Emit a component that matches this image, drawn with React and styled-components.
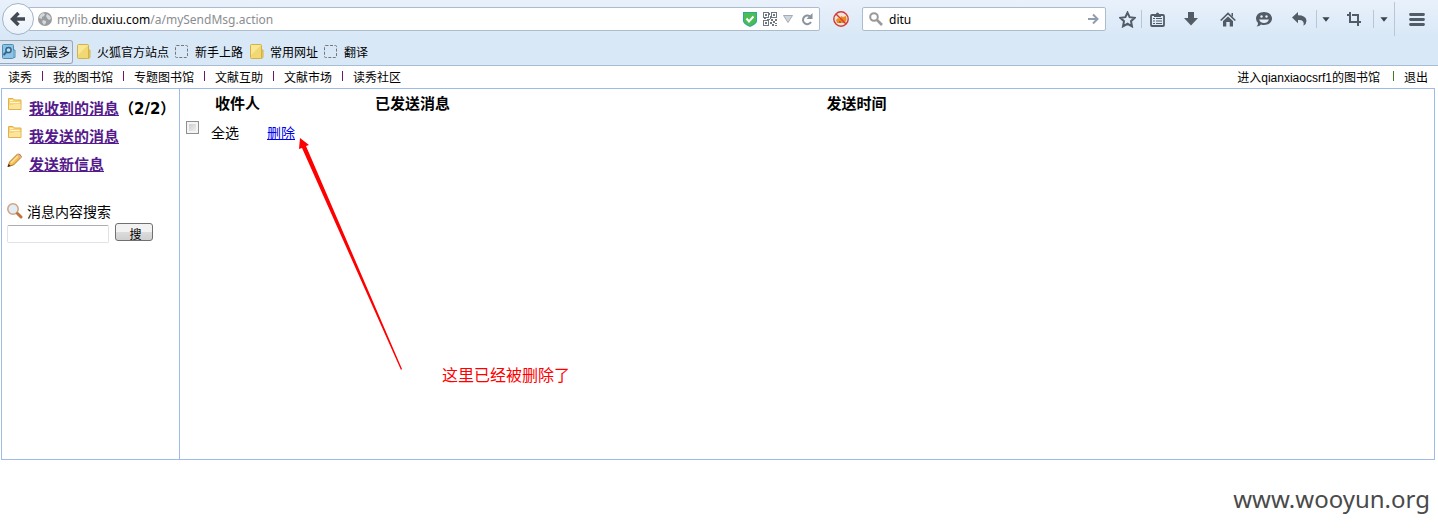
import styled, { createGlobalStyle } from "styled-components";

const GlobalStyle = createGlobalStyle`
    * {
        box-sizing: border-box;
    }

    body {
        margin: 0;
        background: #fff;
        color: #000;
        font-family: "Liberation Sans", "Noto Sans CJK SC", sans-serif;
        font-size: 14px;
    }
`;

const Chrome = styled.header`
    height: 66px;
    background: linear-gradient(#e9f1fb, #d9e8f7 36px);
    border-bottom: 1px solid #a6bdd4;
    font-family: "Noto Sans", "Noto Sans CJK SC", sans-serif;
    font-size: 12px;
`;

const Toolbar = styled.div`
    display: flex;
    align-items: center;
    height: 38px;
    padding-left: 2px;
`;

const BackButton = styled.button`
    display: flex;
    align-items: center;
    justify-content: center;
    width: 32px;
    height: 32px;
    padding: 0;
    border: 1px solid #a3b4c6;
    border-radius: 50%;
    background: linear-gradient(#fdfeff, #e9f1fa);
    z-index: 1;
`;

const Field = styled.div`
    display: flex;
    align-items: center;
    height: 24px;
    border: 1px solid #abbccd;
    border-radius: 2px;
    background: #fff;
`;

const UrlField = styled(Field)`
    flex: 1;
    gap: 6px;
    margin-left: -6px;
    padding: 0 4px 0 9px;
`;

const SearchField = styled(Field)`
    width: 244px;
    gap: 6px;
    padding: 0 4px 0 6px;
`;

const Address = styled.a`
    flex: 1;
    margin-left: -1px;
    color: #8a8d91;
    text-decoration: none;
`;

const Domain = styled.span`
    color: #000;
`;

const SearchInput = styled.input`
    flex: 1;
    min-width: 0;
    padding: 0;
    border: 0;
    outline: 0;
    background: none;
    font: inherit;
`;

const IconButton = styled.button`
    display: flex;
    align-items: center;
    justify-content: center;
    flex: none;
    width: ${(props) => props.$width || 16}px;
    height: 24px;
    padding: 0;
    border: 0;
    background: none;
`;

const Tools = styled.div`
    display: flex;
    align-items: center;
    padding-left: 7px;
`;

const Separator = styled.span`
    width: 1px;
    height: ${(props) => (props.$tall ? 34 : 18)}px;
    background: #b9c7d5;
`;

const Bookmarks = styled.nav`
    display: flex;
    align-items: center;
    gap: 2px;
    height: 27px;
`;

const Bookmark = styled.a`
    display: flex;
    align-items: center;
    gap: 6px;
    height: 24px;
    padding: 0 2px 0 0;
    border: 1px solid ${(props) => (props.$active ? "#98a8b9" : "transparent")};
    border-left: 0;
    border-radius: 0 3px 3px 0;
    background: ${(props) => (props.$active ? "linear-gradient(#d5e1ee, #e3ecf6)" : "none")};
    color: #000;
    text-decoration: none;
    white-space: nowrap;
`;

const SiteNav = styled.nav`
    display: flex;
    align-items: center;
    justify-content: space-between;
    height: 22px;
    padding: 0 10px 2px 8px;
    font-size: 12px;
`;

const NavGroup = styled.div`
    display: flex;
    align-items: center;
`;

const NavLink = styled.a`
    color: #000;
    text-decoration: none;
`;

const Bar = styled.i`
    width: 1px;
    height: 10px;
    margin: 0 10px 0 ${(props) => (props.$wide ? 13 : 10)}px;
    background: ${(props) => (props.$wide ? "#3f7a1f" : "#6b1a6b")};
`;

const Panel = styled.div`
    display: flex;
    min-height: 372px;
    margin: 0 3px 0 1px;
    border: 1px solid #9dbbe6;
`;

const Sidebar = styled.aside`
    flex: none;
    width: 178px;
    padding: 6px 0 0 5px;
    border-right: 1px solid #9dbbe6;
`;

const MenuItem = styled.div`
    display: flex;
    gap: 6px;
    height: 28px;
    font-size: 15px;
    font-weight: bold;
    line-height: 28px;
    white-space: nowrap;
`;

const MenuIconBox = styled.span`
    display: flex;
    padding-top: 2px;
    align-items: flex-start;
`;

const MenuLink = styled.a`
    color: #551a8b;
    text-decoration: underline;
`;

const Count = styled.span`
    margin-left: -6px;
    font-family: "DejaVu Sans", "Noto Sans CJK SC", sans-serif;
`;

const SearchLabel = styled.label`
    display: flex;
    align-items: center;
    gap: 4px;
    height: 24px;
    margin-top: 20px;
`;

const SearchRow = styled.form`
    display: flex;
    gap: 6px;
`;

const MessageInput = styled.input`
    width: 102px;
    height: 18px;
    margin-top: 2px;
    border: 1px solid #dfe2e6;
    border-top-color: #abadb3;
    border-radius: 2px;
`;

const SubmitButton = styled.button`
    width: 38px;
    height: 18px;
    padding: 4px 0 0 3px;
    border: 1px solid #707070;
    border-radius: 3px;
    background: linear-gradient(#f2f2f2 50%, #dcdcdc 50%, #cfcfcf);
    font: inherit;
    font-size: 12px;
    line-height: 14px;
    overflow: hidden;
`;

const Content = styled.main`
    position: relative;
    flex: 1;
`;

const MessageTable = styled.table`
    width: 100%;
    border-collapse: collapse;
    table-layout: fixed;
    line-height: 20px;
`;

const HeadCell = styled.th`
    width: ${(props) => props.$width};
    height: 30px;
    padding: 0 0 0 ${(props) => props.$indent || 0}px;
    font-size: 15px;
    text-align: left;
`;

const Cell = styled.td`
    height: 28px;
    padding: 0 0 0 6px;
`;

const Actions = styled.div`
    display: flex;
    align-items: center;
    height: 28px;
`;

const CheckBox = styled.input`
    appearance: none;
    align-self: flex-start;
    width: 13px;
    height: 13px;
    margin: 2px 12px 0 0;
    border: 1px solid #8e8f8f;
    background: linear-gradient(135deg, #c3c8cd, #f5f5f5);
    box-shadow: inset 0 0 0 2px #f4f4f4;
`;

const DeleteLink = styled.a`
    margin-left: 28px;
    color: #0000ee;
`;

const Arrow = styled.svg`
    position: absolute;
    left: 118px;
    top: 48px;
`;

const Note = styled.p`
    position: absolute;
    left: 262px;
    top: 275px;
    margin: 0;
    color: #f00;
    font-size: 16px;
    line-height: 24px;
`;

const Watermark = styled.footer`
    padding: 22px 8px 0 0;
    color: #4a4a4a;
    font-family: "Noto Sans", sans-serif;
    font-size: 24px;
    line-height: 34px;
    text-align: right;
`;

const INK = "#525c66";

const BackIcon = () => (
    <svg width="16" height="16" viewBox="0 0 16 16">
        <path d="M8.5 2 2.5 8l6 6M3 8h12" fill="none" stroke="#434a54" strokeWidth="3.4" />
    </svg>
);

const GlobeIcon = () => (
    <svg width="14" height="14" viewBox="0 0 14 14">
        <circle cx="7" cy="7" r="7" fill="#999c9f" />
        <path d="M2 3 5 1l2 1-1 2-2 1v2L1 6zM9 2l3 2 1 3-2 1-2-2-1-2zM5 8l3 1v2l-2 2-2-3z" fill="#d5d7d9" />
    </svg>
);

const ShieldIcon = () => (
    <svg width="14" height="15" viewBox="0 0 14 15">
        <path d="M0 0h14v9q0 3-7 6-7-3-7-6z" fill="#2ba79b" />
        <path d="M1 1h12v8q0 2-6 5-6-3-6-5z" fill="#4cbd53" />
        <path d="m3.5 6.5 2.5 3 4.5-5" fill="none" stroke="#fff" strokeWidth="2" />
    </svg>
);

const QrIcon = () => (
    <svg width="14" height="14" viewBox="0 0 14 14" fill="#6f7881" shapeRendering="crispEdges">
        <path fillRule="evenodd" d="M0 0h6v6H0zM1 1v4h4V1zM8 0h6v6H8zM9 1v4h4V1zM0 8h6v6H0zM1 9v4h4V9z" />
        <path d="M2 2h2v2H2zM10 2h2v2h-2zM2 10h2v2H2zM6 1h1v2H6zM7 4h1v3H7zM1 6h2v1H1zM4 7h3v1H4zM8 7h2v2H8zM12 7h2v2h-2zM10 9h2v2h-2zM7 10h2v2H7zM12 11h2v1h-2zM9 12h2v2H9zM12 13h2v1h-2z" />
    </svg>
);

const CaretIcon = ({ soft }) => (
    <svg width={soft ? 10 : 8} height={soft ? 8 : 5} viewBox="0 0 10 8" preserveAspectRatio="none">
        <path d="M.5.5h9L5 7.5z" fill={soft ? "#cfd5dc" : "#3c444d"} stroke={soft ? "#a3abb4" : "none"} />
    </svg>
);

const ReloadIcon = () => (
    <svg width="12" height="13" viewBox="0 0 12 13">
        <path d="M9 3.5A4.3 4.3 0 1 0 10 9" fill="none" stroke="#8b949e" strokeWidth="2" />
        <path d="M11.5 0v6h-6z" fill="#8b949e" />
    </svg>
);

const BlockedIcon = () => (
    <svg width="16" height="16" viewBox="0 0 16 16">
        <circle cx="8" cy="8" r="7" fill="#f3e4da" />
        <path d="m3 9 2-2 2 1 1-3 2 1 3-1 .5 4-2 3H4z" fill="#ee8a1c" />
        <path d="m6 10 2 .5v1.500H6z" fill="#a8642a" />
        <circle cx="8" cy="8" r="7.2" fill="none" stroke="#d23a38" strokeWidth="1.4" />
        <path d="m3 3 10 10" stroke="#d23a38" strokeWidth="1.4" />
    </svg>
);

const GlassIcon = () => (
    <svg width="14" height="14" viewBox="0 0 14 14" fill="none" stroke="#999">
        <circle cx="5" cy="5" r="3.8" strokeWidth="2" />
        <path d="m8 8 5 5" strokeWidth="2.6" />
    </svg>
);

const GoIcon = () => (
    <svg width="11" height="12" viewBox="0 0 11 12">
        <path d="M0 6h9M5 1.5 9.5 6 5 10.5" fill="none" stroke="#8e9eae" strokeWidth="2" />
    </svg>
);

const StarIcon = () => (
    <svg width="17" height="17" viewBox="0 0 16 16">
        <path d="m8 1.5 2 4.3 4.8.6-3.5 3.2.9 4.8L8 12l-4.2 2.4.9-4.8L1.200 6.400 6 5.800z" fill="none" stroke={INK} strokeWidth="1.9" />
    </svg>
);

const ClipboardIcon = () => (
    <svg width="15" height="15" viewBox="0 0 15 15">
        <rect x="1" y="3" width="13" height="11" rx="1" fill="none" stroke={INK} strokeWidth="1.8" />
        <path d="M4 5V2h2a1.500 1.500 0 0 1 3 0h2v3z" fill={INK} />
        <path d="M3 6.500h2M6 6.500h6M3 9h2M6 9h6M3 11.500h2M6 11.500h6" stroke={INK} />
    </svg>
);

const DownloadIcon = () => (
    <svg width="14" height="14" viewBox="0 0 14 14">
        <path d="M4 0h6v6h4l-7 7.5L0 6h4z" fill={INK} />
    </svg>
);

const HomeIcon = () => (
    <svg width="16" height="15" viewBox="0 0 16 15">
        <path d="M8 4.5 13 9v5.5H9.7V10H6.3v4.5H3V9z" fill={INK} />
        <path d="m.7 8.5 7.3-7 7.3 7" fill="none" stroke={INK} strokeWidth="1.7" />
        <path d="M11.5 1H13v4l-1.5-1.5z" fill={INK} />
    </svg>
);

const ChatIcon = () => (
    <svg width="16" height="15" viewBox="0 0 16 15">
        <path d="M8 0c4.5 0 8 2.8 8 6.5S12.5 13 8 13q-1.500 0-3-.5-1.500 2-4.500 2Q2.300 13 2 11 0 9 0 6.500C0 2.800 3.500 0 8 0z" fill={INK} />
        <circle cx="5.5" cy="4.500" r="1.2" fill="#e4edf8" />
        <circle cx="10.5" cy="4.500" r="1.2" fill="#e4edf8" />
        <path d="M3 7.500h10q-1.500 3.500-5 3.500T3 7.500z" fill="#e4edf8" />
    </svg>
);

const UndoIcon = () => (
    <svg width="15" height="14" viewBox="0 0 15 14">
        <path d="M6 0v3.2q8 0 8.500 5.500 0 3-3 5Q13 7.500 6 8v3.200L0 5.600z" fill={INK} />
    </svg>
);

const CropIcon = () => (
    <svg width="14" height="14" viewBox="0 0 14 14">
        <path d="M3 0v10h7M0 3h2M5 3h6v11M12 10h2" fill="none" stroke={INK} strokeWidth="2" />
    </svg>
);

const MenuIcon = () => (
    <svg width="16" height="13" viewBox="0 0 16 13">
        <path d="M1.5 1.5h13M1.5 6.5h13M1.5 11.5h13" stroke={INK} strokeWidth="2.8" strokeLinecap="round" />
    </svg>
);

const MostVisitedIcon = () => (
    <svg width="16" height="16" viewBox="0 0 16 16">
        <rect x="2.5" y=".5" width="11" height="14" rx="1" fill="#8dc3e4" stroke="#4c8db6" />
        <path d="M13.5 6H15v7.5h-1.5" fill="#a7d2eb" stroke="#4c8db6" />
        <circle cx="8.5" cy="6" r="2.6" fill="#b9ddf2" stroke="#33648b" strokeWidth="1.5" />
        <path d="m6.5 8-3 3" stroke="#33648b" strokeWidth="2" />
    </svg>
);

const BookmarkFolderIcon = () => (
    <svg width="16" height="16" viewBox="0 0 16 16">
        <rect x="2.5" y=".5" width="11" height="14" rx="1" fill="#f1d873" stroke="#d3b148" />
        <path d="M3 1h10L3 11z" fill="#f8e895" />
        <path d="M13.5 6H15v7.500l-1.500 1z" fill="#f0d46a" stroke="#d3b148" />
    </svg>
);

const BlankIcon = () => (
    <svg width="15" height="15" viewBox="0 0 15 15">
        <rect x="1.5" y="1.5" width="12" height="12" rx="1" fill="none" stroke="#777" strokeDasharray="3 1.5" />
    </svg>
);

const FolderIcon = () => (
    <svg width="16" height="16" viewBox="0 0 16 16">
        <path d="M1.5 12.5v-11H6L7.5 3H14v9.500z" fill="#f8d477" stroke="#e3b04c" />
        <path d="M3 5.5h9.5M3 3.5h3" stroke="#fff6d5" />
        <path d="M2 12V8h4l1-1h6.500v5z" fill="#fbe49c" />
    </svg>
);

const PencilIcon = () => (
    <svg width="16" height="16" viewBox="0 0 16 16">
        <path d="M1 13.5 2.5 9l8-8q3-.5 4 3l-8 8z" fill="#f4bd52" stroke="#b4792c" />
        <path d="m4 10 8-8" stroke="#ffe5a4" strokeWidth="1.5" />
        <path d="m10.5 1 4 3-1.200 1.200L9.500 2z" fill="#e9ad92" />
        <path d="m.5 14 1.200-3 2 2z" fill="#3b2b1b" />
    </svg>
);

const LensIcon = () => (
    <svg width="16" height="16" viewBox="0 0 16 16">
        <circle cx="6" cy="6" r="5.2" fill="#e1edf7" stroke="#d3a27a" strokeWidth="1.5" />
        <path d="m10.500 10.500 3.500 3.500" stroke="#bd7440" strokeWidth="3" strokeLinecap="round" />
    </svg>
);

const bookmarks = [
    { label: "访问最多", icon: <MostVisitedIcon />, active: true },
    { label: "火狐官方站点", icon: <BookmarkFolderIcon /> },
    { label: "新手上路", icon: <BlankIcon /> },
    { label: "常用网址", icon: <BookmarkFolderIcon /> },
    { label: "翻译", icon: <BlankIcon /> },
];

const sections = ["我的图书馆", "专题图书馆", "文献互助", "文献市场", "读秀社区"];

function BrowserChrome() {
    return (
        <Chrome>
            <Toolbar>
                <BackButton aria-label="Back"><BackIcon /></BackButton>
                <UrlField>
                    <GlobeIcon />
                    <Address href="#">mylib.<Domain>duxiu.com</Domain>/a/mySendMsg.action</Address>
                    <ShieldIcon />
                    <QrIcon />
                    <CaretIcon soft />
                    <IconButton aria-label="Reload"><ReloadIcon /></IconButton>
                </UrlField>
                <IconButton $width={42} aria-label="Blocked"><BlockedIcon /></IconButton>
                <SearchField>
                    <GlassIcon />
                    <SearchInput aria-label="Search" defaultValue="ditu" />
                    <IconButton aria-label="Go"><GoIcon /></IconButton>
                </SearchField>
                <Tools>
                    <IconButton $width={28} aria-label="Star"><StarIcon /></IconButton>
                    <Separator />
                    <IconButton $width={30} aria-label="Bookmarks"><ClipboardIcon /></IconButton>
                    <IconButton $width={38} aria-label="Downloads"><DownloadIcon /></IconButton>
                    <IconButton $width={36} aria-label="Home"><HomeIcon /></IconButton>
                    <IconButton $width={36} aria-label="Chat"><ChatIcon /></IconButton>
                    <IconButton $width={34} aria-label="Undo"><UndoIcon /></IconButton>
                    <Separator />
                    <IconButton $width={18} aria-label="Undo list"><CaretIcon /></IconButton>
                    <IconButton $width={38} aria-label="Crop"><CropIcon /></IconButton>
                    <Separator />
                    <IconButton $width={20} aria-label="Crop options"><CaretIcon /></IconButton>
                    <Separator $tall />
                    <IconButton $width={43} aria-label="Menu"><MenuIcon /></IconButton>
                </Tools>
            </Toolbar>
            <Bookmarks>
                {bookmarks.map((item) => (
                    <Bookmark key={item.label} href="#" $active={item.active}>
                        {item.icon}
                        {item.label}
                    </Bookmark>
                ))}
            </Bookmarks>
        </Chrome>
    );
}

function App() {
    return (
        <>
            <GlobalStyle />
            <BrowserChrome />
            <SiteNav>
                <NavGroup>
                    <NavLink href="#">读秀</NavLink>
                    {sections.map((name) => (
                        <NavGroup key={name}>
                            <Bar />
                            <NavLink href="#">{name}</NavLink>
                        </NavGroup>
                    ))}
                </NavGroup>
                <NavGroup>
                    <NavLink href="#">进入qianxiaocsrf1的图书馆</NavLink>
                    <Bar $wide />
                    <NavLink href="#">退出</NavLink>
                </NavGroup>
            </SiteNav>
            <Panel>
                <Sidebar>
                    <MenuItem>
                        <MenuIconBox><FolderIcon /></MenuIconBox>
                        <MenuLink href="#">我收到的消息</MenuLink>
                        <Count>（2/2）</Count>
                    </MenuItem>
                    <MenuItem>
                        <MenuIconBox><FolderIcon /></MenuIconBox>
                        <MenuLink href="#">我发送的消息</MenuLink>
                    </MenuItem>
                    <MenuItem>
                        <MenuIconBox><PencilIcon /></MenuIconBox>
                        <MenuLink href="#">发送新信息</MenuLink>
                    </MenuItem>
                    <SearchLabel htmlFor="message-search"><LensIcon />消息内容搜索</SearchLabel>
                    <SearchRow>
                        <MessageInput id="message-search" type="text" />
                        <SubmitButton type="button">搜</SubmitButton>
                    </SearchRow>
                </Sidebar>
                <Content>
                    <MessageTable>
                        <thead>
                            <tr>
                                <HeadCell $width="195px" $indent={35}>收件人</HeadCell>
                                <HeadCell $width="36%">已发送消息</HeadCell>
                                <HeadCell>发送时间</HeadCell>
                            </tr>
                        </thead>
                        <tbody>
                            <tr>
                                <Cell colSpan="3">
                                    <Actions>
                                        <CheckBox id="check-all" type="checkbox" />
                                        <label htmlFor="check-all">全选</label>
                                        <DeleteLink href="#">删除</DeleteLink>
                                    </Actions>
                                </Cell>
                            </tr>
                        </tbody>
                    </MessageTable>
                    <Arrow width="106" height="234" viewBox="0 0 106 234">
                        <path d="M2 1 1 12l3-1 99 222 1-1L8 9l3-1z" fill="#f00" />
                    </Arrow>
                    <Note>这里已经被删除了</Note>
                </Content>
            </Panel>
            <Watermark>www.wooyun.org</Watermark>
        </>
    );
}

export default App;
